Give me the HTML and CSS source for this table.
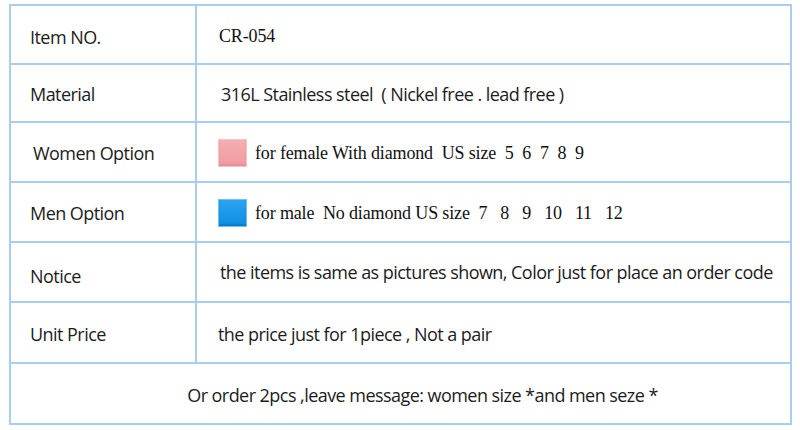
FILE: index.html
```html
<!DOCTYPE html>
<html>
<head>
<meta charset="utf-8">
<link rel="stylesheet" href="styles.css">
</head>
<body>
<div class="spec">
  <div class="cell label r1">Item NO.</div>
  <div class="cell value serif r1">CR-054</div>

  <div class="cell label r2">Material</div>
  <div class="cell value r2 v-mat">316L Stainless steel  ( Nickel free . lead free )</div>

  <div class="cell label r3 l-women">Women Option</div>
  <div class="cell value serif r3"><span class="swatch pink"></span><span class="opt">for female With diamond  US size  5  6  7  8  9</span></div>

  <div class="cell label r4">Men Option</div>
  <div class="cell value serif r4"><span class="swatch blue"></span><span class="opt">for male  No diamond US size  7   8   9   10   11   12</span></div>

  <div class="cell label r5 l-notice">Notice</div>
  <div class="cell value r5 v-notice">the items is same as pictures shown, Color just for place an order code</div>

  <div class="cell label r6">Unit Price</div>
  <div class="cell value r6 v-price">the price just for 1piece , Not a pair</div>

  <div class="cell full r7">Or order 2pcs ,leave message: women size *and men seze *</div>
</div>
</body>
</html>
```

FILE: styles.css
```css
html, body {
  margin: 0;
  padding: 0;
  background: #ffffff;
}

body {
  padding: 4px 0 0 9px;
}

.spec {
  width: 779px;
  display: grid;
  grid-template-columns: 184px 1fr;
  grid-template-rows: 57px 56px 58px 58px 58px 59px 59px;
  gap: 2px;
  padding: 2px;
  background: #a8cdee;
  font-family: "Open Sans", "Noto Sans", sans-serif;
  font-size: 18px;
  color: #1c1c1c;
}

.cell {
  background: #ffffff;
  display: flex;
  align-items: center;
  white-space: pre;
  padding-top: 2px;
}

.label {
  padding-left: 19px;
  letter-spacing: -0.55px;
}

.l-women {
  padding-left: 22px;
}

.l-notice {
  padding-top: 7px;
}

.value {
  padding-left: 22px;
  letter-spacing: -0.55px;
}

.v-mat {
  padding-left: 24px;
}

.v-notice {
  padding-left: 23px;
  padding-top: 0;
}

.v-price {
  padding-left: 21px;
}

.serif {
  font-family: "Liberation Serif", "Times New Roman", serif;
  font-size: 18px;
  letter-spacing: -0.15px;
  color: #111111;
}

.r1 { padding-top: 4px; }

.swatch {
  width: 29px;
  height: 28px;
  margin-left: -1px;
  margin-right: 8px;
  box-sizing: border-box;
  flex: none;
}

.pink {
  background: linear-gradient(180deg, #f5aeb1 0%, #f09ca1 100%);
  border: 1px solid #f6c3c5;
  box-shadow: inset 0 -2px 2px rgba(200, 100, 110, 0.25);
}

.blue {
  background: linear-gradient(180deg, #2aa4ef 0%, #0e8fe2 100%);
  border: 1px solid #6fc0f3;
  box-shadow: inset 0 -2px 2px rgba(0, 70, 150, 0.3);
}

.full {
  grid-column: 1 / 3;
  justify-content: center;
  padding-left: 44px;
  letter-spacing: -0.55px;
}
```
